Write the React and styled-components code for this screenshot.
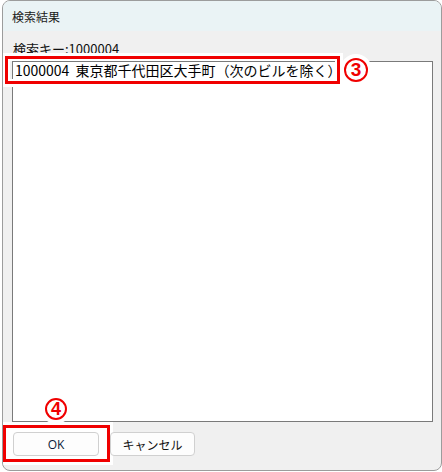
import React from "react";
import styled, { createGlobalStyle } from "styled-components";

const Global = createGlobalStyle`
  html, body { margin: 0; padding: 0; background: #ffffff; }
  body { font-family: "Noto Sans CJK JP", "Noto Sans", sans-serif; }
`;

const Window = styled.div`
  position: relative;
  box-sizing: border-box;
  width: 440px;
  height: 471px;
  margin-left: 2px;
  border: 1px solid #9c9c9c;
  border-radius: 8px;
  background: #f0f0f0;
  overflow: hidden;
  display: flex;
  flex-direction: column;
`;

const TitleBar = styled.div`
  height: 30px;
  flex: none;
  background: #eaf3f5;
  display: flex;
  align-items: center;
  padding-left: 9px;
  font-size: 12px;
  color: #1a1a1a;
`;

const Body = styled.div`
  flex: 1;
  display: flex;
  flex-direction: column;
  padding: 10px 8px 0 9px;
`;

const KeyLabel = styled.div`
  height: 16px;
  line-height: 16px;
  font-size: 13px;
  color: #111;
  padding-left: 1px;
  margin-bottom: 4px;
`;

const ListBox = styled.div`
  box-sizing: border-box;
  height: 361px;
  background: #ffffff;
  border: 1px solid #7a7a7a;
  padding: 0 2px;
`;

const ListItem = styled.div`
  font-size: 14px;
  line-height: 17px;
  color: #000;
  white-space: nowrap;
  word-spacing: 3px;
`;

const ButtonRow = styled.div`
  position: relative;
  z-index: 2;
  display: flex;
  gap: 11px;
  margin-top: 10px;
  padding-left: 1px;
`;

const Button = styled.div`
  box-sizing: border-box;
  width: ${(p) => p.$w}px;
  height: 24px;
  border: 1px solid #d0d0d0;
  border-radius: 4px;
  background: #fdfdfd;
  display: flex;
  align-items: center;
  justify-content: center;
  font-size: 12px;
  color: ${(p) => (p.$primary ? "#0a1a3a" : "#111")};
  font-family: ${(p) =>
    p.$primary ? '"Open Sans", "Noto Sans", sans-serif' : '"Noto Sans CJK JP", sans-serif'};
`;

const MarkBox = styled.div`
  position: absolute;
  box-sizing: border-box;
  left: ${(p) => p.$x}px;
  top: ${(p) => p.$y}px;
  width: ${(p) => p.$w}px;
  height: ${(p) => p.$h}px;
  border: 3px solid #f00000;
  background: ${(p) => (p.$fill ? "#ffffff" : "transparent")};
  box-shadow: 0 0 0 3px #ffffff, inset 0 0 0 ${(p) => (p.$fill ? 0 : 2)}px #ffffff;
  z-index: ${(p) => (p.$fill ? 1 : 3)};
`;

const Marker = styled.div`
  position: absolute;
  box-sizing: border-box;
  left: ${(p) => p.$x}px;
  top: ${(p) => p.$y}px;
  width: ${(p) => p.$d}px;
  height: ${(p) => p.$d}px;
  border: 2px solid #f00000;
  border-radius: 50%;
  background: #ffffff;
  box-shadow: 0 0 0 4px #ffffff;
  color: #f00000;
  font-family: "Liberation Sans", Arial, sans-serif;
  font-weight: bold;
  font-size: ${(p) => p.$fs}px;
  display: flex;
  align-items: center;
  justify-content: center;
  z-index: 4;
`;

export default function App() {
  return (
    <>
      <Global />
      <Window>
        <TitleBar>検索結果</TitleBar>
        <Body>
          <KeyLabel>検索キー:1000004</KeyLabel>
          <ListBox>
            <ListItem>1000004 東京都千代田区大手町（次のビルを除く）</ListItem>
          </ListBox>
          <ButtonRow>
            <Button $w={86} $primary>OK</Button>
            <Button $w={85}>キャンセル</Button>
          </ButtonRow>
        </Body>
        <MarkBox $x={2} $y={55} $w={335} $h={28} />
        <Marker $x={341} $y={57} $d={24} $fs={19}>3</Marker>
        <MarkBox $x={0} $y={424} $w={107} $h={37} $fill />
        <Marker $x={42} $y={397} $d={22} $fs={18}>4</Marker>
      </Window>
    </>
  );
}
